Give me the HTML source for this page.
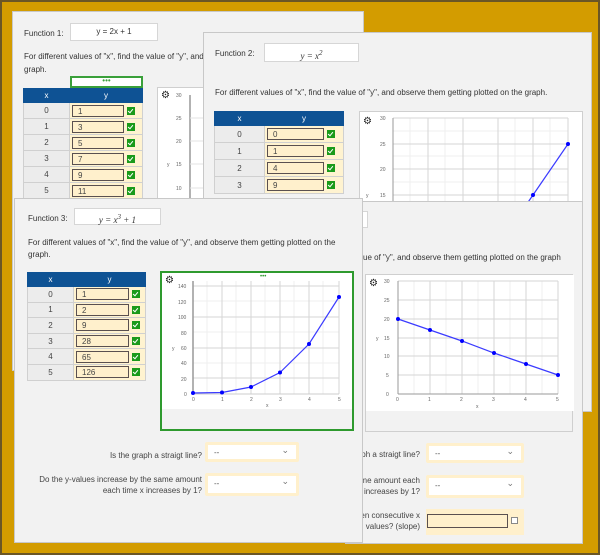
<!DOCTYPE html>
<html><head><meta charset="utf-8"><style>
*{box-sizing:border-box;margin:0;padding:0}
body{width:600px;height:555px;overflow:hidden;background:#d39c00;font-family:"Liberation Sans",sans-serif;color:#333;position:relative}
.frame{position:absolute;left:0;top:0;width:600px;height:555px;border:2px solid #6a5626}
.p{position:absolute;background:#f2f2f2;border:1px solid #c8c8c8;overflow:hidden}
.a{position:absolute}
.t{font-size:8px;white-space:nowrap}
.fb{position:absolute;background:#fff;border:1px solid #d6d6d6;font-family:"Liberation Serif",serif;font-style:italic;font-size:9px;text-align:center}
table{position:absolute;border-collapse:collapse;font-size:8px}
th{background:#0e5294;color:#fff;font-weight:normal;height:14px;border:1px solid #0e5294}
td{border:1px solid #d0d0d0;text-align:center;background:#ececec;color:#444}
td.y{background:#fff3d0;text-align:left;padding:1px 2px}
.in{display:inline-block;vertical-align:middle;background:#fff0cc;border:1px solid #5a5050;padding-left:5px;line-height:11px;height:12px}
.ck{display:inline-block;vertical-align:middle;width:8px;height:8px;background:#1a9a1a;margin-left:3px;position:relative}
.ck:after{content:"";position:absolute;left:2px;top:1px;width:2px;height:4px;border:solid #fff;border-width:0 1px 1px 0;transform:rotate(40deg)}
.g{position:absolute;background:#fff;border:1px solid #cfcfcf}
.sel{position:absolute;background:#fff;border:3px solid #fff0cc;border-radius:2px;font-size:8px;padding:3px 6px;color:#555}
.sel:after{content:"⌄";position:absolute;right:7px;top:0px;font-size:9px;color:#777}
.lbl{position:absolute;font-size:8px;text-align:right;color:#444;line-height:11px;white-space:nowrap}
</style></head><body>

<!-- Panel 1 -->
<div class="p" style="left:12px;top:11px;width:352px;height:360px">
  <div class="a t" style="left:11px;top:17px">Function 1:</div>
  <div class="fb" style="left:57px;top:11px;width:88px;height:18px;line-height:16px;font-style:normal;font-family:'Liberation Sans',sans-serif;font-size:8px">y = 2x + 1</div>
  <div class="a t" style="left:11px;top:40px">For different values of "x", find the value of "y", and</div>
  <div class="a t" style="left:11px;top:53px">graph.</div>
  <div class="a" style="left:57px;top:64px;width:73px;height:12px;border:2px solid #3aa03a;background:#fff;text-align:center;font-size:8px;line-height:6px;color:#3aa03a">•••</div>
  <table style="left:10px;top:76px;width:120px">
    <tr><th style="width:46px">x</th><th>y</th></tr>
    <tr style="height:16px"><td>0</td><td class="y"><span class="in" style="width:52px">1</span><span class="ck"></span></td></tr>
    <tr style="height:16px"><td>1</td><td class="y"><span class="in" style="width:52px">3</span><span class="ck"></span></td></tr>
    <tr style="height:16px"><td>2</td><td class="y"><span class="in" style="width:52px">5</span><span class="ck"></span></td></tr>
    <tr style="height:16px"><td>3</td><td class="y"><span class="in" style="width:52px">7</span><span class="ck"></span></td></tr>
    <tr style="height:16px"><td>4</td><td class="y"><span class="in" style="width:52px">9</span><span class="ck"></span></td></tr>
    <tr style="height:16px"><td>5</td><td class="y"><span class="in" style="width:52px">11</span><span class="ck"></span></td></tr>
  </table>
  <div class="g" style="left:144px;top:75px;width:60px;height:130px">
    <svg width="60" height="130" font-size="5" fill="#666">
      <text x="3" y="10" font-size="10" fill="#222">⚙</text>
      <text x="18" y="9">30</text><text x="18" y="32">25</text><text x="18" y="55">20</text><text x="18" y="78">15</text><text x="18" y="102">10</text>
      <text x="9" y="78">y</text>
      <line x1="32" y1="7" x2="32" y2="130" stroke="#999" stroke-width="1.5"/>
      <g stroke="#e3e3e3"><line x1="32" y1="30" x2="60" y2="30"/><line x1="32" y1="53" x2="60" y2="53"/><line x1="32" y1="76" x2="60" y2="76"/><line x1="32" y1="100" x2="60" y2="100"/></g>
    </svg>
  </div>
</div>

<!-- Panel 2 -->
<div class="p" style="left:203px;top:32px;width:389px;height:380px">
  <div class="a t" style="left:11px;top:16px">Function 2:</div>
  <div class="fb" style="left:60px;top:10px;width:95px;height:19px;line-height:18px">y = x<sup style="font-size:7px">2</sup></div>
  <div class="a t" style="left:11px;top:55px">For different values of "x", find the value of "y", and observe them getting plotted on the graph.</div>
  <table style="left:10px;top:78px;width:130px">
    <tr><th style="width:50px">x</th><th>y</th></tr>
    <tr style="height:17px"><td>0</td><td class="y"><span class="in" style="width:57px">0</span><span class="ck"></span></td></tr>
    <tr style="height:17px"><td>1</td><td class="y"><span class="in" style="width:57px">1</span><span class="ck"></span></td></tr>
    <tr style="height:17px"><td>2</td><td class="y"><span class="in" style="width:57px">4</span><span class="ck"></span></td></tr>
    <tr style="height:17px"><td>3</td><td class="y"><span class="in" style="width:57px">9</span><span class="ck"></span></td></tr>
  </table>
  <div class="g" style="left:155px;top:78px;width:224px;height:150px">
    <svg width="224" height="150" font-size="5" fill="#666">
      <text x="3" y="12" font-size="10" fill="#222">⚙</text>
      <g stroke="#efefef"><line x1="50" y1="6" x2="50" y2="150"/><line x1="85" y1="6" x2="85" y2="150"/><line x1="155" y1="6" x2="155" y2="150"/><line x1="190" y1="6" x2="190" y2="150"/>
      <line x1="33" y1="19" x2="208" y2="19"/><line x1="33" y1="44" x2="208" y2="44"/><line x1="33" y1="70" x2="208" y2="70"/><line x1="33" y1="96" x2="208" y2="96"/></g>
      <g stroke="#d6d6d6"><line x1="33" y1="6" x2="208" y2="6"/><line x1="33" y1="32" x2="208" y2="32"/><line x1="33" y1="57" x2="208" y2="57"/><line x1="33" y1="83" x2="208" y2="83"/>
      <line x1="68" y1="6" x2="68" y2="150"/><line x1="103" y1="6" x2="103" y2="150"/><line x1="138" y1="6" x2="138" y2="150"/><line x1="173" y1="6" x2="173" y2="150"/><line x1="208" y1="6" x2="208" y2="150"/></g>
      <line x1="33" y1="6" x2="33" y2="150" stroke="#999"/>
      <text x="20" y="8">30</text><text x="20" y="34">25</text><text x="20" y="59">20</text><text x="20" y="85">15</text><text x="6" y="85">y</text>
      <polyline points="138,134 173,83 208,32" fill="none" stroke="#3b3bff" stroke-width="1.2"/>
      <circle cx="173" cy="83" r="2" fill="#00f"/><circle cx="208" cy="32" r="2" fill="#00f"/>
    </svg>
  </div>
</div>

<!-- Panel 4 -->
<div class="p" style="left:345px;top:201px;width:238px;height:343px">
  <div class="a" style="left:10px;top:9px;width:12px;height:17px;background:#fff;border:1px solid #d6d6d6"></div>
  <div class="a t" style="left:17px;top:51px">ue of "y", and observe them getting plotted on the graph</div>
  <div class="g" style="left:19px;top:72px;width:208px;height:158px;background:#f2f2f2">
    <svg width="208" height="136" font-size="5" fill="#666" style="background:#fff;display:block">
      <text x="3" y="11" font-size="10" fill="#222">⚙</text>
      <g stroke="#efefef"><line x1="48" y1="6" x2="48" y2="119"/><line x1="80" y1="6" x2="80" y2="119"/><line x1="112" y1="6" x2="112" y2="119"/><line x1="144" y1="6" x2="144" y2="119"/><line x1="176" y1="6" x2="176" y2="119"/>
      <line x1="32" y1="25" x2="192" y2="25"/><line x1="32" y1="44" x2="192" y2="44"/><line x1="32" y1="63" x2="192" y2="63"/><line x1="32" y1="81" x2="192" y2="81"/><line x1="32" y1="100" x2="192" y2="100"/></g>
      <g stroke="#d6d6d6"><line x1="32" y1="6" x2="192" y2="6"/><line x1="32" y1="25" x2="192" y2="25"/><line x1="32" y1="44" x2="192" y2="44"/><line x1="32" y1="63" x2="192" y2="63"/><line x1="32" y1="81" x2="192" y2="81"/><line x1="32" y1="100" x2="192" y2="100"/>
      <line x1="64" y1="6" x2="64" y2="119"/><line x1="96" y1="6" x2="96" y2="119"/><line x1="128" y1="6" x2="128" y2="119"/><line x1="160" y1="6" x2="160" y2="119"/><line x1="192" y1="6" x2="192" y2="119"/></g>
      <line x1="32" y1="6" x2="32" y2="119" stroke="#999"/><line x1="32" y1="119" x2="192" y2="119" stroke="#999"/>
      <text x="18" y="8">30</text><text x="18" y="27">25</text><text x="18" y="46">20</text><text x="18" y="65">15</text><text x="18" y="83">10</text><text x="20" y="102">5</text><text x="20" y="121">0</text><text x="10" y="65">y</text>
      <text x="30" y="126">0</text><text x="62" y="126">1</text><text x="94" y="126">2</text><text x="126" y="126">3</text><text x="158" y="126">4</text><text x="190" y="126">5</text><text x="110" y="133">x</text>
      <polyline points="32,44 64,55 96,66 128,78 160,89 192,100" fill="none" stroke="#3b3bff" stroke-width="1.2"/>
      <g fill="#00f"><circle cx="32" cy="44" r="2"/><circle cx="64" cy="55" r="2"/><circle cx="96" cy="66" r="2"/><circle cx="128" cy="78" r="2"/><circle cx="160" cy="89" r="2"/><circle cx="192" cy="100" r="2"/></g>
    </svg>
  </div>
  <div class="lbl" style="right:162px;top:247px">ph a straigt line?</div>
  <div class="sel" style="left:80px;top:241px;width:98px;height:20px">--</div>
  <div class="lbl" style="right:162px;top:273px">me amount each<br>x increases by 1?</div>
  <div class="sel" style="left:80px;top:273px;width:98px;height:23px">--</div>
  <div class="lbl" style="right:162px;top:308px">en consecutive x<br>values? (slope)</div>
  <div class="a" style="left:80px;top:307px;width:98px;height:26px;background:#fff0cc"></div>
  <div class="a" style="left:81px;top:312px;width:81px;height:14px;border:1px solid #5a5050;background:#fff0cc"></div>
  <div class="a" style="left:165px;top:315px;width:7px;height:7px;border:1px solid #888;background:#fff"></div>
</div>

<!-- Panel 3 -->
<div class="p" style="left:14px;top:198px;width:349px;height:345px">
  <div class="a t" style="left:13px;top:15px">Function 3:</div>
  <div class="fb" style="left:59px;top:9px;width:87px;height:17px;line-height:16px">y = x<sup style="font-size:7px">3</sup> + 1</div>
  <div class="a t" style="left:13px;top:39px">For different values of "x", find the value of "y", and observe them getting plotted on the</div>
  <div class="a t" style="left:13px;top:51px">graph.</div>
  <table style="left:12px;top:73px;width:119px">
    <tr><th style="width:46px">x</th><th>y</th></tr>
    <tr style="height:15.6px"><td>0</td><td class="y"><span class="in" style="width:53px">1</span><span class="ck"></span></td></tr>
    <tr style="height:15.6px"><td>1</td><td class="y"><span class="in" style="width:53px">2</span><span class="ck"></span></td></tr>
    <tr style="height:15.6px"><td>2</td><td class="y"><span class="in" style="width:53px">9</span><span class="ck"></span></td></tr>
    <tr style="height:15.6px"><td>3</td><td class="y"><span class="in" style="width:53px">28</span><span class="ck"></span></td></tr>
    <tr style="height:15.6px"><td>4</td><td class="y"><span class="in" style="width:53px">65</span><span class="ck"></span></td></tr>
    <tr style="height:15.6px"><td>5</td><td class="y"><span class="in" style="width:53px">126</span><span class="ck"></span></td></tr>
  </table>
  <div class="a" style="left:145px;top:72px;width:194px;height:160px;border:2px solid #2e9a2e;background:#f2f2f2">
    <svg width="190" height="136" font-size="5" fill="#666" style="background:#fff;display:block">
      <text x="3" y="10" font-size="10" fill="#222">⚙</text>
      <text x="98" y="5" font-size="6" fill="#2e9a2e">•••</text>
      <g stroke="#efefef"><line x1="45" y1="8" x2="45" y2="121"/><line x1="74" y1="8" x2="74" y2="121"/><line x1="103" y1="8" x2="103" y2="121"/><line x1="132" y1="8" x2="132" y2="121"/><line x1="161" y1="8" x2="161" y2="121"/>
      <line x1="31" y1="28" x2="177" y2="28"/><line x1="31" y1="59" x2="177" y2="59"/><line x1="31" y1="90" x2="177" y2="90"/></g>
      <g stroke="#d6d6d6"><line x1="31" y1="13" x2="177" y2="13"/><line x1="31" y1="44" x2="177" y2="44"/><line x1="31" y1="75" x2="177" y2="75"/><line x1="31" y1="105" x2="177" y2="105"/>
      <line x1="60" y1="8" x2="60" y2="121"/><line x1="89" y1="8" x2="89" y2="121"/><line x1="118" y1="8" x2="118" y2="121"/><line x1="147" y1="8" x2="147" y2="121"/><line x1="177" y1="8" x2="177" y2="121"/></g>
      <line x1="31" y1="8" x2="31" y2="121" stroke="#999" stroke-width="1.5"/><line x1="31" y1="121" x2="177" y2="121" stroke="#ccc"/>
      <text x="16" y="15">140</text><text x="16" y="31">120</text><text x="16" y="46">100</text><text x="19" y="62">80</text><text x="19" y="77">60</text><text x="19" y="92">40</text><text x="19" y="108">20</text><text x="22" y="123">0</text><text x="10" y="77">y</text>
      <text x="30" y="128">0</text><text x="59" y="128">1</text><text x="88" y="128">2</text><text x="117" y="128">3</text><text x="146" y="128">4</text><text x="176" y="128">5</text><text x="104" y="134">x</text>
      <polyline points="31,120 60,119.5 89,114 118,99.5 147,71 177,24" fill="none" stroke="#3b3bff" stroke-width="1.2"/>
      <g fill="#00f"><circle cx="31" cy="120" r="2"/><circle cx="60" cy="119.5" r="2"/><circle cx="89" cy="114" r="2"/><circle cx="118" cy="99.5" r="2"/><circle cx="147" cy="71" r="2"/><circle cx="177" cy="24" r="2"/></g>
    </svg>
  </div>
  <div class="lbl" style="right:160px;top:251px">Is the graph a straigt line?</div>
  <div class="sel" style="left:190px;top:243px;width:94px;height:20px">--</div>
  <div class="lbl" style="right:160px;top:275px">Do the y-values increase by the same amount<br>each time x increases by 1?</div>
  <div class="sel" style="left:190px;top:274px;width:94px;height:23px">--</div>
</div>

<div class="frame"></div>
</body></html>
